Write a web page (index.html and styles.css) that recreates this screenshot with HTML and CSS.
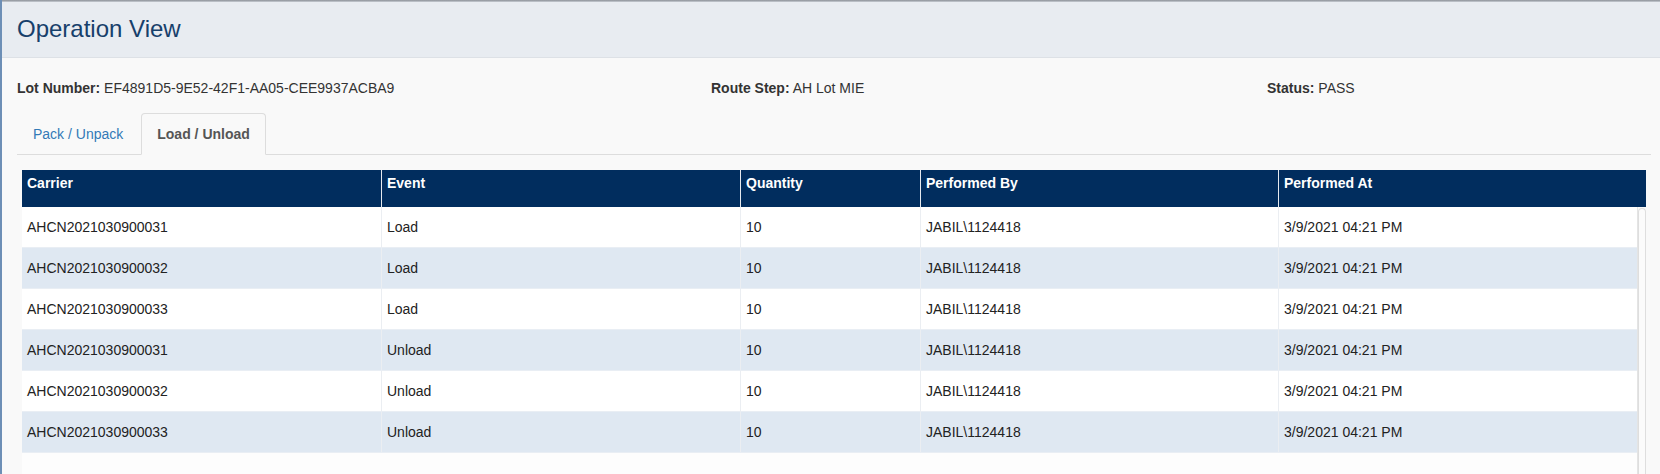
FILE: index.html
```html
<!DOCTYPE html>
<html>
<head>
<meta charset="utf-8">
<link rel="stylesheet" href="styles.css">
</head>
<body>
<div class="app">
  <div class="topshade"></div>
  <div class="header"><h1 class="title">Operation View</h1></div>
  <div class="content">
    <div class="info">
      <div><b>Lot Number:</b> EF4891D5-9E52-42F1-AA05-CEE9937ACBA9</div>
      <div><b>Route Step:</b> AH Lot MIE</div>
      <div><b>Status:</b> PASS</div>
    </div>
    <ul class="tabs">
      <li class="tab"><a>Pack / Unpack</a></li>
      <li class="tab active"><a>Load / Unload</a></li>
    </ul>
    <div class="grid-wrap">
      <div class="thead">
        <div class="th">Carrier</div>
        <div class="th">Event</div>
        <div class="th">Quantity</div>
        <div class="th">Performed By</div>
        <div class="th">Performed At</div>
      </div>
      <div class="tbody-wrap">
        <div class="tbody">
          <div class="tr"><div class="td">AHCN2021030900031</div><div class="td">Load</div><div class="td">10</div><div class="td">JABIL\1124418</div><div class="td">3/9/2021 04:21 PM</div></div>
          <div class="tr alt"><div class="td">AHCN2021030900032</div><div class="td">Load</div><div class="td">10</div><div class="td">JABIL\1124418</div><div class="td">3/9/2021 04:21 PM</div></div>
          <div class="tr"><div class="td">AHCN2021030900033</div><div class="td">Load</div><div class="td">10</div><div class="td">JABIL\1124418</div><div class="td">3/9/2021 04:21 PM</div></div>
          <div class="tr alt"><div class="td">AHCN2021030900031</div><div class="td">Unload</div><div class="td">10</div><div class="td">JABIL\1124418</div><div class="td">3/9/2021 04:21 PM</div></div>
          <div class="tr"><div class="td">AHCN2021030900032</div><div class="td">Unload</div><div class="td">10</div><div class="td">JABIL\1124418</div><div class="td">3/9/2021 04:21 PM</div></div>
          <div class="tr alt"><div class="td">AHCN2021030900033</div><div class="td">Unload</div><div class="td">10</div><div class="td">JABIL\1124418</div><div class="td">3/9/2021 04:21 PM</div></div>
        </div>
        <div class="scrollbar"></div>
      </div>
    </div>
  </div>
</div>
</body>
</html>
```
FILE: styles.css
```css
* { box-sizing: border-box; }
html, body { margin: 0; padding: 0; }
body {
  background: #f9f9f9;
  font-family: "Liberation Sans", Arial, sans-serif;
  font-size: 14px;
  line-height: 20px;
  color: #333;
  overflow: hidden;
}
.app {
  border-left: 2px solid #6d8fb6;
  height: 474px;
  overflow: hidden;
}
.topshade {
  height: 2px;
  background: linear-gradient(#8a8f96, #c9ced5);
}
.header {
  height: 56px;
  background: #e8ecf1;
  border-bottom: 1px solid #dde1e6;
  display: flex;
  align-items: center;
  padding-left: 15px;
}
.title {
  margin: 0;
  font-size: 24px;
  font-weight: normal;
  line-height: 28px;
  color: #17406b;
  padding-bottom: 2px;
}
.content {
  padding: 0 9px 0 15px;
}
.info {
  display: grid;
  grid-template-columns: 694px 556px 1fr;
  margin-top: 20px;
  color: #333;
}
.info b { color: #333; }
.tabs {
  list-style: none;
  margin: 15px 0 0;
  padding: 0;
  display: flex;
  border-bottom: 1px solid #ddd;
}
.tab {
  margin-right: 2px;
  margin-bottom: -1px;
}
.tab a {
  display: block;
  padding: 10px 15px;
  border: 1px solid transparent;
  border-radius: 4px 4px 0 0;
  color: #337ab7;
}
.tab.active a {
  background: #f9f9f9;
  border-color: #ddd #ddd transparent;
  color: #555;
  font-weight: bold;
}
.grid-wrap {
  margin-top: 15px;
  padding: 0 5px;
}
.thead {
  display: grid;
  grid-template-columns: 359px 359px 180px 358px 1fr;
  height: 37px;
  background: #012d5e;
  color: #fff;
  font-weight: bold;
}
.th {
  padding: 3px 5px 0;
}
.th + .th { border-left: 1px solid #e6e9ee; }
.tbody-wrap {
  display: flex;
  height: 267px;
}
.tbody {
  width: 1616px;
  background: #fdfdfd;
  border-right: 1px solid #e4e4e4;
}
.tr {
  display: grid;
  grid-template-columns: 359px 359px 180px 358px 1fr;
  height: 41px;
  border-bottom: 1px solid #e9eef4;
  background: #fff;
  color: #222;
}
.tr.alt { background: #dfe8f2; }
.td {
  padding: 10px 5px;
}
.td + .td { border-left: 1px solid #ebeef2; }
.scrollbar {
  width: 8px;
  margin-top: 1px;
  border: 1px solid #dedede;
  border-radius: 4px 4px 0 0;
  border-bottom: none;
  background: #fbfbfb;
}
```
